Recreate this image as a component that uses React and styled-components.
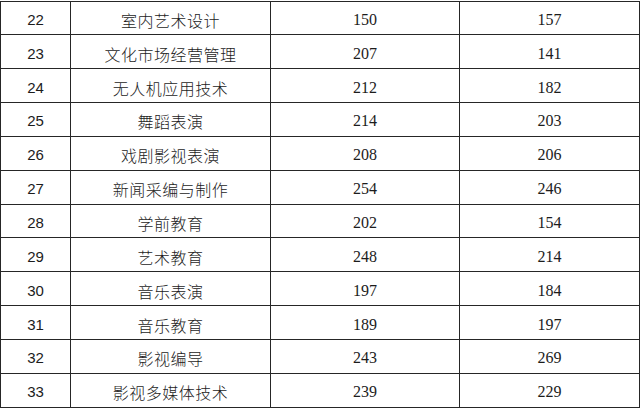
import React from "react";
import styled, { createGlobalStyle } from "styled-components";

const Global = createGlobalStyle`
  html, body { margin: 0; padding: 0; background: #ffffff; }
  body { width: 640px; height: 411px; overflow: hidden; }
`;

const Grid = styled.div`
  display: grid;
  grid-template-columns: 69px 199px 188px 179px;
  grid-auto-rows: 32.85px;
  gap: 1px;
  padding: 1px;
  width: max-content;
  margin-top: 0.5px;
  background: #262626;
  color: #1c1c1c;
`;

const Cell = styled.div`
  background: #ffffff;
  display: flex;
  align-items: center;
  justify-content: center;
  padding-top: 4px;
  box-sizing: border-box;
  white-space: nowrap;
  font-family: ${(p) =>
    p.$kind === "name"
      ? '"Noto Sans CJK SC", sans-serif'
      : p.$kind === "idx"
      ? '"Liberation Sans", sans-serif'
      : '"Liberation Serif", serif'};
  font-size: ${(p) => (p.$kind === "idx" ? "15px" : "16px")};
  font-weight: ${(p) => (p.$kind === "name" ? 300 : 400)};
  letter-spacing: ${(p) => (p.$kind === "name" ? "0.5px" : "0")};
  line-height: 20px;
`;

const rows = [
  ["22", "室内艺术设计", "150", "157"],
  ["23", "文化市场经营管理", "207", "141"],
  ["24", "无人机应用技术", "212", "182"],
  ["25", "舞蹈表演", "214", "203"],
  ["26", "戏剧影视表演", "208", "206"],
  ["27", "新闻采编与制作", "254", "246"],
  ["28", "学前教育", "202", "154"],
  ["29", "艺术教育", "248", "214"],
  ["30", "音乐表演", "197", "184"],
  ["31", "音乐教育", "189", "197"],
  ["32", "影视编导", "243", "269"],
  ["33", "影视多媒体技术", "239", "229"],
];

export default function App() {
  return (
    <>
      <Global />
      <Grid>
        {rows.map((r) => (
          <React.Fragment key={r[0]}>
            <Cell $kind="idx">{r[0]}</Cell>
            <Cell $kind="name">{r[1]}</Cell>
            <Cell $kind="num">{r[2]}</Cell>
            <Cell $kind="num">{r[3]}</Cell>
          </React.Fragment>
        ))}
      </Grid>
    </>
  );
}
